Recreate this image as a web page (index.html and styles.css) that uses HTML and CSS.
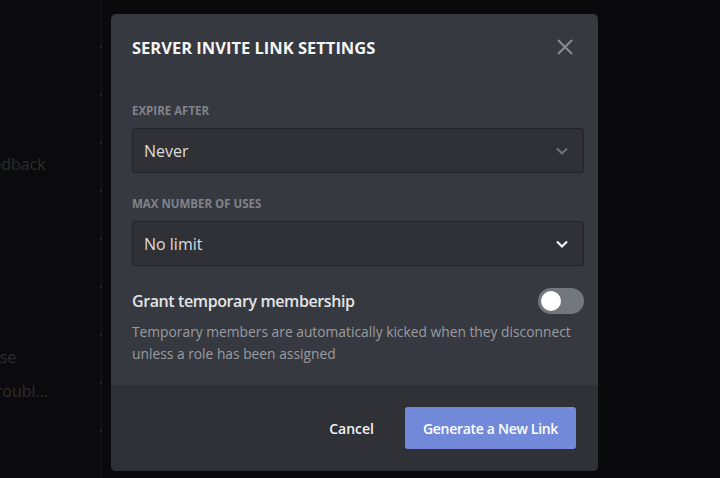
FILE: index.html
```html
<!DOCTYPE html>
<html lang="en">
<head>
<meta charset="utf-8">
<title>Server Invite Link Settings</title>
<link rel="stylesheet" href="styles.css">
</head>
<body>
<div class="app">
  <aside class="sidebar">
    <div class="side-item item-feedback">Feedback</div>
    <div class="side-item item-e">e</div>
    <div class="side-item item-se">Close</div>
    <div class="side-item item-troubl">Troubl...</div>
  </aside>
  <div class="rail"></div>
  <main class="backdrop"></main>
</div>

<div class="modal">
  <div class="modal-body">
    <div class="modal-header">
      <h2 class="title">SERVER INVITE LINK SETTINGS</h2>
      <button class="close" aria-label="Close">
        <svg width="18" height="18" viewBox="0 0 18 18"><path d="M2 2 L16 16 M16 2 L2 16" stroke="currentColor" stroke-width="2" fill="none"/></svg>
      </button>
    </div>

    <div class="field">
      <div class="label">EXPIRE AFTER</div>
      <div class="select">
        <span>Never</span>
        <svg class="chev chev-dim" width="14" height="10" viewBox="0 0 14 10"><path d="M2 2.5 L7 7.5 L12 2.5" stroke="currentColor" stroke-width="2.2" fill="none"/></svg>
      </div>
    </div>

    <div class="field">
      <div class="label">MAX NUMBER OF USES</div>
      <div class="select">
        <span>No limit</span>
        <svg class="chev" width="14" height="10" viewBox="0 0 14 10"><path d="M2 2.5 L7 7.5 L12 2.5" stroke="currentColor" stroke-width="2.2" fill="none"/></svg>
      </div>
    </div>

    <div class="toggle-row">
      <div class="toggle-title">Grant temporary membership</div>
      <div class="switch"><div class="knob"></div></div>
    </div>
    <p class="note">Temporary members are automatically kicked when they disconnect unless a role has been assigned</p>
  </div>
  <div class="modal-footer">
    <button class="btn-cancel">Cancel</button>
    <button class="btn-primary">Generate a New Link</button>
  </div>
</div>
</body>
</html>
```

FILE: styles.css
```css
* { box-sizing: border-box; }
html, body {
  margin: 0;
  padding: 0;
  width: 720px;
  height: 478px;
  overflow: hidden;
  background: #0b0b0d;
  font-family: "Open Sans", "Noto Sans", sans-serif;
}
.app {
  display: flex;
  height: 478px;
}
.sidebar {
  width: 100px;
  overflow: hidden;
  display: flex;
  flex-direction: column;
  color: #2b2c30;
  font-size: 16px;
}
.side-item { white-space: nowrap; }
.item-feedback { margin-top: 153px; margin-left: -25px; }
.item-e { margin-top: 96px; margin-left: -8px; }
.item-se { margin-top: 53px; margin-left: -24px; }
.item-troubl { margin-top: 12px; margin-left: -13px; }
.rail {
  width: 2px;
  background: repeating-linear-gradient(to bottom, #0f1210 0 46px, #1c2a20 46px 48px);
}
.backdrop { flex: 1; background: #0a0a0c; }

.modal {
  position: absolute;
  left: 111px;
  top: 14px;
  width: 487px;
  height: 457px;
  background: #36393f;
  border-radius: 5px;
  display: flex;
  flex-direction: column;
  overflow: hidden;
}
.modal-body {
  flex: 1;
  padding: 0 13px 0 21px;
}
.modal-header {
  display: flex;
  align-items: center;
  justify-content: space-between;
  height: 66px;
  padding-right: 11px;
}
.title {
  margin: 0;
  font-size: 16.5px;
  font-weight: 700;
  color: #f4f5f6;
  letter-spacing: 0;
}
.close {
  background: none;
  border: 0;
  padding: 0;
  color: #8a8c91;
  display: flex;
}
.label {
  font-size: 11.5px;
  font-weight: 700;
  color: #80838a;
  margin-top: 23px;
  height: 15px;
  line-height: 15px;
}
.field:first-of-type .label { margin-top: 24px; }
.select {
  margin-top: 10px;
  height: 45px;
  width: 452px;
  background: #2f3136;
  border: 1px solid #222428;
  border-radius: 3px;
  display: flex;
  align-items: center;
  justify-content: space-between;
  padding: 0 14px 0 11px;
  color: #dcddde;
  font-size: 16px;
}
.chev { color: #f0f1f2; }
.chev-dim { color: #6d7075; }
.toggle-row {
  display: flex;
  align-items: center;
  justify-content: space-between;
  width: 452px;
  margin-top: 22px;
}
.toggle-title {
  font-size: 16px;
  font-weight: 600;
  color: #e3e4e6;
  letter-spacing: -0.4px;
}
.switch {
  width: 46px;
  height: 26px;
  border-radius: 13px;
  background: #72767d;
  padding: 3px;
  display: flex;
}
.knob {
  width: 20px;
  height: 20px;
  border-radius: 50%;
  background: #fff;
}
.note {
  margin: 7px 0 0;
  font-size: 13.8px;
  line-height: 22px;
  color: #9a9ca1;
  width: 450px;
}
.modal-footer {
  height: 86px;
  background: #2f3136;
  display: flex;
  align-items: center;
  justify-content: flex-end;
  padding-right: 22px;
  gap: 31px;
}
.btn-cancel {
  background: none;
  border: 0;
  color: #f2f3f5;
  font-family: inherit;
  font-size: 14px;
  font-weight: 600;
  padding: 0;
}
.btn-primary {
  width: 171px;
  height: 42px;
  background: #7289da;
  border: 0;
  border-radius: 3px;
  color: #fff;
  font-family: inherit;
  font-size: 14px;
  font-weight: 600;
  letter-spacing: -0.3px;
}
```
